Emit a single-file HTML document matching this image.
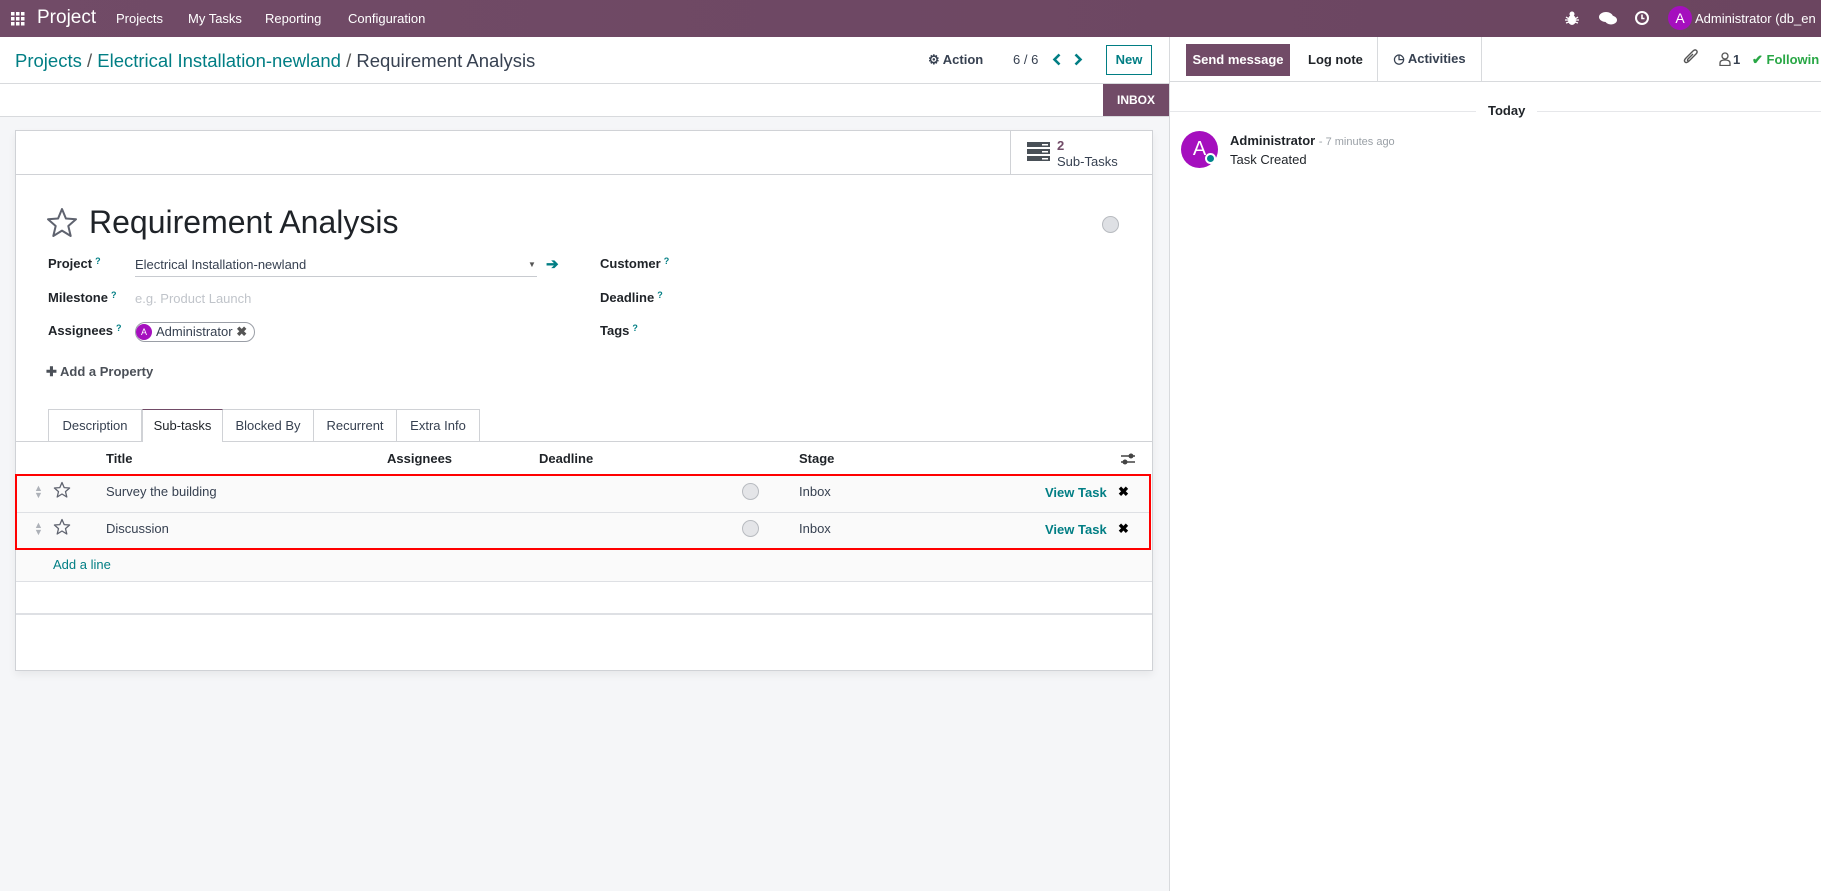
<!DOCTYPE html>
<html><head><meta charset="utf-8"><style>
*{box-sizing:border-box;margin:0;padding:0}
body{width:1821px;height:891px;overflow:hidden;font-family:"Liberation Sans",sans-serif;font-size:13px;color:#374151;background:#fff;position:relative}
.a{position:absolute;white-space:nowrap}
.teal{color:#017e84}
.b{font-weight:bold;color:#1f2328}
.q{color:#017e84;font-size:9px;vertical-align:top;margin-left:3px}
</style></head><body>
<div class="a" style="left:0;top:0;width:1821px;height:37px;background:linear-gradient(90deg,#714b67,#6b4560)"></div>
<svg class="a" style="left:11px;top:12px" width="14" height="14" fill="#fff"><rect x="0" y="0" width="3.5" height="3.5"/><rect x="5" y="0" width="3.5" height="3.5"/><rect x="10" y="0" width="3.5" height="3.5"/><rect x="0" y="5" width="3.5" height="3.5"/><rect x="5" y="5" width="3.5" height="3.5"/><rect x="10" y="5" width="3.5" height="3.5"/><rect x="0" y="10" width="3.5" height="3.5"/><rect x="5" y="10" width="3.5" height="3.5"/><rect x="10" y="10" width="3.5" height="3.5"/></svg>
<div class="a" style="left:37px;top:7px;font-size:19px;color:#fff">Project</div>
<div class="a" style="left:116px;top:11px;font-size:13px;color:#fff">Projects</div>
<div class="a" style="left:188px;top:11px;font-size:13px;color:#fff">My Tasks</div>
<div class="a" style="left:265px;top:11px;font-size:13px;color:#fff">Reporting</div>
<div class="a" style="left:348px;top:11px;font-size:13px;color:#fff">Configuration</div>
<svg class="a" style="left:1565px;top:11px" width="14" height="15" fill="#fff"><ellipse cx="7" cy="9" rx="4" ry="5"/><circle cx="7" cy="3" r="2.5"/><path d="M1 6L4 8M13 6L10 8M1 12L4 11M13 12L10 11M0 9H3M14 9H11" stroke="#fff" stroke-width="1.3"/></svg>
<svg class="a" style="left:1599px;top:11px" width="18" height="15" fill="#fff"><ellipse cx="7" cy="6" rx="7" ry="5"/><ellipse cx="12" cy="9" rx="6" ry="4.5"/></svg>
<svg class="a" style="left:1634px;top:10px" width="16" height="16"><circle cx="8" cy="8" r="6" fill="none" stroke="#fff" stroke-width="2"/><path d="M8 4.5V8.5H10.5" stroke="#fff" stroke-width="1.6" fill="none"/></svg>
<div class="a" style="left:1668px;top:6px;width:24px;height:24px;border-radius:50%;background:#a50fbe;color:#fff;font-size:14px;text-align:center;line-height:24px">A</div>
<div class="a" style="left:1695px;top:11px;font-size:13px;color:#fff">Administrator (db_en</div>
<div class="a" style="left:15px;top:50px;font-size:18.5px"><span class="teal">Projects</span> <span style="color:#555">/</span> <span class="teal">Electrical Installation-newland</span> <span style="color:#555">/</span> <span style="color:#374151">Requirement Analysis</span></div>
<div class="a" style="left:928px;top:52px;font-size:13px;font-weight:bold;color:#374151">⚙ Action</div>
<div class="a" style="left:1013px;top:52px;font-size:13px">6 / 6</div>
<svg class="a" style="left:1052px;top:53px" width="10" height="13"><path d="M7.5 1.5L2.5 6.5L7.5 11.5" fill="none" stroke="#017e84" stroke-width="2.6"/></svg>
<svg class="a" style="left:1073px;top:53px" width="10" height="13"><path d="M2.5 1.5L7.5 6.5L2.5 11.5" fill="none" stroke="#017e84" stroke-width="2.6"/></svg>
<div class="a teal" style="left:1106px;top:45px;width:46px;height:30px;border:1px solid #017e84;text-align:center;line-height:28px;font-size:13px;font-weight:bold">New</div>
<div class="a" style="left:0;top:83px;width:1169px;height:1px;background:#d8dadd"></div>
<div class="a" style="left:1103px;top:84px;width:66px;height:32px;background:#714b67;color:#fff;font-weight:bold;font-size:12px;text-align:center;line-height:32px">INBOX</div>
<div class="a" style="left:0;top:116px;width:1169px;height:775px;background:#f5f6f8;border-top:1px solid #d8dadd"></div>
<div class="a" style="left:15px;top:130px;width:1138px;height:541px;background:#fff;border:1px solid #d0d2d6;box-shadow:0 4px 8px rgba(0,0,0,.06)"></div>
<div class="a" style="left:16px;top:174px;width:1136px;height:1px;background:#d0d2d6"></div>
<div class="a" style="left:1010px;top:131px;width:1px;height:43px;background:#d0d2d6"></div>
<svg class="a" style="left:1027px;top:142px" width="23" height="19"><rect x="0" y="0" width="23" height="5" fill="#495057"/><rect x="0" y="7" width="23" height="5" fill="#495057"/><rect x="0" y="14" width="23" height="5" fill="#495057"/><rect x="15" y="2" width="6" height="1.5" fill="#fff"/><rect x="15" y="9" width="6" height="1.5" fill="#fff"/><rect x="15" y="16" width="6" height="1.5" fill="#fff"/></svg>
<div class="a" style="left:1057px;top:138px;font-size:13px;color:#714b67;font-weight:bold">2</div>
<div class="a" style="left:1057px;top:154px;font-size:13px;color:#374151">Sub-Tasks</div>
<div class="a" style="left:1102px;top:216px;width:17px;height:17px;border-radius:50%;background:#dee0e4;border:1px solid #b8bbc0"></div>
<svg class="a" style="left:46px;top:207px" width="32" height="32"><path d="M16 2 L19.9 11.5 L30 12.3 L22.3 19 L24.7 29 L16 23.6 L7.3 29 L9.7 19 L2 12.3 L12.1 11.5 Z" fill="none" stroke="#5f636f" stroke-width="2" stroke-linejoin="round"/></svg>
<div class="a" style="left:89px;top:204px;font-size:32px;color:#1f2328">Requirement Analysis</div>
<div class="a b" style="left:48px;top:256px;font-size:13px">Project<span class="q">?</span></div>
<div class="a" style="left:135px;top:257px;font-size:13px">Electrical Installation-newland</div>
<div class="a" style="left:135px;top:276px;width:402px;height:1px;background:#c8cbd0"></div>
<div class="a" style="left:528px;top:260px;font-size:8px;color:#555">▼</div>
<div class="a teal" style="left:546px;top:255px;font-size:15px;font-weight:bold">➔</div>
<div class="a b" style="left:48px;top:290px;font-size:13px">Milestone<span class="q">?</span></div>
<div class="a" style="left:135px;top:291px;font-size:13px;color:#c0c4ca">e.g. Product Launch</div>
<div class="a b" style="left:48px;top:323px;font-size:13px">Assignees<span class="q">?</span></div>
<div class="a" style="left:135px;top:322px;width:120px;height:20px;border:1px solid #9a9ea6;border-radius:10px"></div>
<div class="a" style="left:136px;top:324px;width:16px;height:16px;border-radius:50%;background:#a50fbe;color:#fff;font-size:9px;text-align:center;line-height:16px">A</div>
<div class="a" style="left:156px;top:324px;font-size:13px">Administrator <b style="color:#555">✖</b></div>
<div class="a" style="left:46px;top:364px;font-size:13px;color:#4b5058;font-weight:bold">✚ Add a Property</div>
<div class="a b" style="left:600px;top:256px;font-size:13px">Customer<span class="q">?</span></div>
<div class="a b" style="left:600px;top:290px;font-size:13px">Deadline<span class="q">?</span></div>
<div class="a b" style="left:600px;top:323px;font-size:13px">Tags<span class="q">?</span></div>
<div class="a" style="left:16px;top:441px;width:1136px;height:1px;background:#d0d2d6"></div>
<div class="a" style="left:48px;top:409px;width:94px;height:32px;border:1px solid #d0d2d6;border-bottom:none;text-align:center;line-height:32px;font-size:13px">Description</div>
<div class="a" style="left:142px;top:409px;width:81px;height:33px;border:1px solid #d0d2d6;border-top:1px solid #714b67;border-bottom:none;background:#fff;text-align:center;line-height:32px;font-size:13px;color:#1f2328">Sub-tasks</div>
<div class="a" style="left:223px;top:409px;width:91px;height:32px;border:1px solid #d0d2d6;border-left:none;border-bottom:none;text-align:center;line-height:32px;font-size:13px">Blocked By</div>
<div class="a" style="left:314px;top:409px;width:83px;height:32px;border:1px solid #d0d2d6;border-left:none;border-bottom:none;text-align:center;line-height:32px;font-size:13px">Recurrent</div>
<div class="a" style="left:397px;top:409px;width:83px;height:32px;border:1px solid #d0d2d6;border-left:none;border-bottom:none;text-align:center;line-height:32px;font-size:13px">Extra Info</div>
<div class="a b" style="left:106px;top:451px;font-size:13px">Title</div>
<div class="a b" style="left:387px;top:451px;font-size:13px">Assignees</div>
<div class="a b" style="left:539px;top:451px;font-size:13px">Deadline</div>
<div class="a b" style="left:799px;top:451px;font-size:13px">Stage</div>
<svg class="a" style="left:1120px;top:452px" width="16" height="14"><path d="M1 4H15M1 10H15" stroke="#444" stroke-width="1.5"/><circle cx="11" cy="4" r="2.5" fill="#444"/><circle cx="5" cy="10" r="2.5" fill="#444"/></svg>
<div class="a" style="left:16px;top:474px;width:1136px;height:107px;background:#fafafa"></div>
<div class="a" style="left:16px;top:512px;width:1134px;height:1px;background:#dee0e4"></div>
<div class="a" style="left:16px;top:581px;width:1136px;height:1px;background:#dee0e4"></div>
<div class="a" style="left:16px;top:613px;width:1136px;height:2px;background:#dee0e4"></div>
<div class="a" style="left:15px;top:474px;width:1136px;height:76px;border:2px solid #f00"></div>
<div class="a" style="left:34px;top:485px;font-size:9px;color:#adb1b8;line-height:7px">▲<br>▼</div>
<div class="a" style="left:34px;top:522px;font-size:9px;color:#adb1b8;line-height:7px">▲<br>▼</div>
<svg class="a" style="left:53px;top:481px" width="18" height="18"><path d="M9 1.5 L11.2 6.6 L16.6 7 L12.5 10.6 L13.8 16 L9 13 L4.2 16 L5.5 10.6 L1.4 7 L6.8 6.6 Z" fill="none" stroke="#5f636f" stroke-width="1.3" stroke-linejoin="round"/></svg>
<svg class="a" style="left:53px;top:518px" width="18" height="18"><path d="M9 1.5 L11.2 6.6 L16.6 7 L12.5 10.6 L13.8 16 L9 13 L4.2 16 L5.5 10.6 L1.4 7 L6.8 6.6 Z" fill="none" stroke="#5f636f" stroke-width="1.3" stroke-linejoin="round"/></svg>
<div class="a" style="left:106px;top:484px;font-size:13px">Survey the building</div>
<div class="a" style="left:106px;top:521px;font-size:13px">Discussion</div>
<div class="a" style="left:742px;top:483px;width:17px;height:17px;border-radius:50%;background:#e4e5e8;border:1px solid #b8bbc0"></div>
<div class="a" style="left:742px;top:520px;width:17px;height:17px;border-radius:50%;background:#e4e5e8;border:1px solid #b8bbc0"></div>
<div class="a" style="left:799px;top:484px;font-size:13px">Inbox</div>
<div class="a" style="left:799px;top:521px;font-size:13px">Inbox</div>
<div class="a teal" style="left:1045px;top:485px;font-size:13px;font-weight:bold">View Task</div>
<div class="a teal" style="left:1045px;top:522px;font-size:13px;font-weight:bold">View Task</div>
<div class="a" style="left:1118px;top:484px;font-size:13px;color:#000;font-weight:bold">✖</div>
<div class="a" style="left:1118px;top:521px;font-size:13px;color:#000;font-weight:bold">✖</div>
<div class="a teal" style="left:53px;top:557px;font-size:13px">Add a line</div>
<div class="a" style="left:1169px;top:37px;width:1px;height:854px;background:#d8dadd"></div>
<div class="a" style="left:1186px;top:44px;width:104px;height:32px;background:#714b67;color:#fff;font-weight:bold;font-size:13px;text-align:center;line-height:32px">Send message</div>
<div class="a b" style="left:1308px;top:52px;font-size:13px">Log note</div>
<div class="a" style="left:1377px;top:37px;width:105px;height:45px;border-left:1px solid #d8dadd;border-right:1px solid #d8dadd;border-bottom:1px solid #d8dadd;font-weight:bold;font-size:13px;text-align:center;line-height:44px">◷ Activities</div>
<div class="a" style="left:1170px;top:81px;width:207px;height:1px;background:#d8dadd"></div>
<div class="a" style="left:1482px;top:81px;width:339px;height:1px;background:#d8dadd"></div>
<svg class="a" style="left:1683px;top:48px" width="16" height="18"><path d="M12 7L6 13Q3.5 15.5 2 14Q0.5 12.5 3 10L10 3Q12 1 13.5 2.5Q15 4 13 6L6.5 12.5Q5.5 13.5 4.8 12.8Q4.1 12.1 5 11L10 6" fill="none" stroke="#555" stroke-width="1.4"/></svg>
<svg class="a" style="left:1719px;top:52px" width="12" height="14"><circle cx="6" cy="4" r="3" fill="none" stroke="#555" stroke-width="1.3"/><path d="M1 13.5V11Q1 8 6 8Q11 8 11 11V13.5Z" fill="none" stroke="#555" stroke-width="1.3"/></svg>
<div class="a" style="left:1733px;top:52px;font-size:13px;font-weight:bold">1</div>
<div class="a" style="left:1752px;top:52px;font-size:13px;font-weight:bold;color:#28a745">✔ Followin</div>
<div class="a" style="left:1170px;top:111px;width:651px;height:1px;background:#e6e7ea"></div>
<div class="a" style="left:1476px;top:103px;padding:0 12px;background:#fff;font-weight:bold;font-size:13px;color:#1f2328">Today</div>
<div class="a" style="left:1181px;top:131px;width:37px;height:37px;border-radius:50%;background:#a50fbe;color:#fff;font-size:20px;text-align:center;line-height:37px">A</div>
<div class="a" style="left:1205px;top:153px;width:11px;height:11px;border-radius:50%;background:#00868b;border:2px solid #fff"></div>
<div class="a" style="left:1230px;top:133px;font-size:13px"><b style="color:#1f2328">Administrator</b> <span style="color:#9aa0a6;font-size:11px">- 7 minutes ago</span></div>
<div class="a" style="left:1230px;top:152px;font-size:13px;color:#1f2328">Task Created</div>
</body></html>
